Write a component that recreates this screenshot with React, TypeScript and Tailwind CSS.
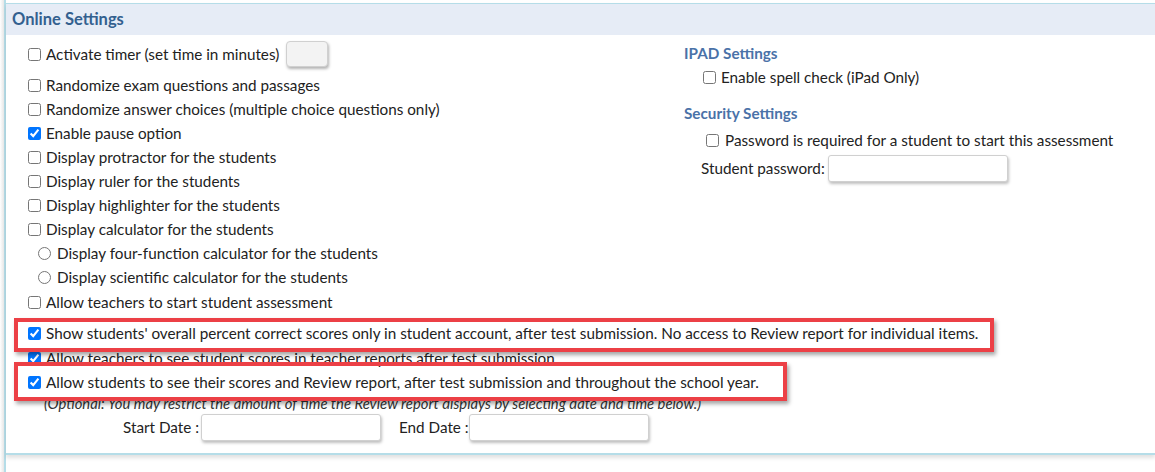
import React from "react";

const font = { fontFamily: "Lato, 'Open Sans', sans-serif" };

function Check({ checked = false, label, className = "" }: { checked?: boolean; label: string; className?: string }) {
  return (
    <label className={"flex items-center gap-[5px] " + className}>
      <input type="checkbox" defaultChecked={checked} className="w-[13px] h-[13px] accent-[#0075ff] shrink-0" />
      <span>{label}</span>
    </label>
  );
}

function Radio({ label, className = "" }: { label: string; className?: string }) {
  return (
    <label className={"flex items-center gap-[6px] " + className}>
      <input type="radio" name="calc" className="w-[13px] h-[13px] shrink-0" />
      <span>{label}</span>
    </label>
  );
}

const inputCls =
  "h-[27px] bg-white border border-[#d0d0d0] rounded-[3px] shadow-[1px_2px_3px_rgba(0,0,0,0.25)]";

export default function App() {
  return (
    <div className="relative w-[1155px] h-[472px] bg-white overflow-hidden text-[15.25px] text-[#222]" style={font}>
      <div className="absolute left-0 top-0 w-[4px] h-full bg-gradient-to-r from-white to-[#e6e6e6]" />
      <div className="ml-[4px] h-full border-l-2 border-[#b5dde8]">
        <div className="pt-[3px]">
          <div className="border-t-[1.5px] border-[#b5dde8] border-b-2 shadow-[0_3px_4px_rgba(0,0,0,0.12)] h-[452px]">
            <div className="h-[31px] bg-[#e6ecf6] flex items-center pl-[6px] text-[16.5px] font-bold text-[#33608f]">
              Online Settings
            </div>
            <div className="flex">
              <div className="w-[678px] pl-[22px]">
                <div className="h-[30px] mt-[4px] flex items-center">
                  <Check label="Activate timer (set time in minutes)" />
                  <div className="ml-[7px] w-[42px] h-[26px] bg-[#f3f3f3] border border-[#d0d0d0] rounded-[4px] shadow-[1px_2px_3px_rgba(0,0,0,0.3)]" />
                </div>
                <div className="mt-[5px]">
                  <Check className="h-[23px]" label="Randomize exam questions and passages" />
                  <Check className="h-[24px]" label="Randomize answer choices (multiple choice questions only)" />
                  <Check className="h-[24px]" checked label="Enable pause option" />
                  <Check className="h-[24px]" label="Display protractor for the students" />
                  <Check className="h-[24px]" label="Display ruler for the students" />
                  <Check className="h-[24px]" label="Display highlighter for the students" />
                  <Check className="h-[24px]" label="Display calculator for the students" />
                  <Radio className="h-[24px] pl-[10px]" label="Display four-function calculator for the students" />
                  <Radio className="h-[25px] pl-[10px]" label="Display scientific calculator for the students" />
                  <Check className="h-[24px]" label="Allow teachers to start student assessment" />
                </div>
              </div>
              <div className="flex-1 pt-[6px]">
                <div className="h-[24px] flex items-center font-bold text-[#4a72a8]">IPAD Settings</div>
                <Check className="h-[23px] pl-[19px] pt-[1px]" label="Enable spell check (iPad Only)" />
                <div className="h-[26px] mt-[12px] flex items-center font-bold text-[#4a72a8]">Security Settings</div>
                <label className="flex items-center gap-[6px] h-[26px] pl-[22px] pt-[2px]">
                  <input type="checkbox" className="w-[13px] h-[13px] accent-[#0075ff] shrink-0" />
                  <span>Password is required for a student to start this assessment</span>
                </label>
                <div className="flex items-center pl-[17px] mt-[2px] h-[28px]">
                  <span>Student password:</span>
                  <div className={inputCls + " ml-[3px] w-[180px]"} />
                </div>
              </div>
            </div>
            <div className="pl-[22px]">
              <Check className="h-[25px] mt-[7px]" checked label="Show students' overall percent correct scores only in student account, after test submission. No access to Review report for individual items." />
              <Check className="h-[24px]" checked label="Allow teachers to see student scores in teacher reports after test submission" />
              <Check className="h-[25px]" checked label="Allow students to see their scores and Review report, after test submission and throughout the school year." />
              <div className="h-[16px] flex items-center pl-[16px] text-[14.8px] italic text-[#333] leading-none">
                (Optional: You may restrict the amount of time the Review report displays by selecting date and time below.)
              </div>
              <div className="flex items-center h-[28px] mt-[2px] pl-[95px]">
                <span>Start Date :</span>
                <div className={inputCls + " ml-[2px] w-[180px]"} />
                <span className="ml-[18px]">End Date :</span>
                <div className={inputCls + " ml-[0px] w-[180px]"} />
              </div>
            </div>
          </div>
        </div>
      </div>
      <div className="absolute left-[14px] top-[318px] w-[980px] h-[34px] border-[4px] border-[#ec4046] shadow-[2px_3px_4px_rgba(0,0,0,0.35)]" />
      <div className="absolute left-[14px] top-[362px] w-[773px] h-[39px] border-[4px] border-[#ec4046] shadow-[2px_3px_4px_rgba(0,0,0,0.35)]" />
    </div>
  );
}
